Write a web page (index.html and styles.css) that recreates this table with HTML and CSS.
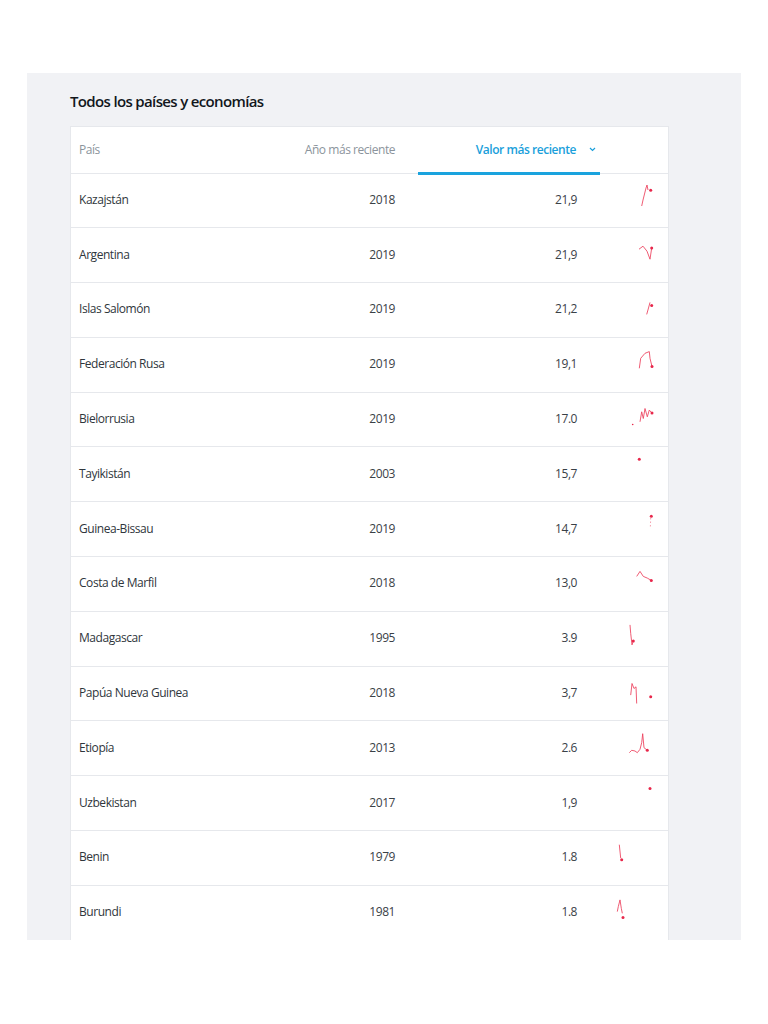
FILE: index.html
```html
<!DOCTYPE html>
<html lang="es">
<head>
<meta charset="utf-8">
<title>Todos los países y economías</title>
<link rel="stylesheet" href="styles.css">
</head>
<body>
<section class="panel">
  <h2 class="title">Todos los países y economías</h2>
  <div class="table">
    <div class="row head">
      <div class="cell c-country">País</div>
      <div class="cell c-year">Año más reciente</div>
      <div class="cell c-value sorted">Valor más reciente
        <svg class="chev" width="7" height="5" viewBox="0 0 7 5"><path d="M1 1l2.5 2.5L6 1" fill="none" stroke="#1a9fdb" stroke-width="1.2"/></svg>
      </div>
      <div class="cell c-chart"></div>
    </div>

    <div class="row">
      <div class="cell c-country">Kazajstán</div>
      <div class="cell c-year">2018</div>
      <div class="cell c-value">21,9</div>
      <div class="cell c-chart"><svg class="spark" viewBox="0 0 69 55"><polyline points="41.7,32 43,26 44.5,20 46,14 47,11 48,16"/><circle cx="50.7" cy="16.3" r="1.5"/></svg></div>
    </div>
    <div class="row">
      <div class="cell c-country">Argentina</div>
      <div class="cell c-year">2019</div>
      <div class="cell c-value">21,9</div>
      <div class="cell c-chart"><svg class="spark" viewBox="0 0 69 55"><polyline points="39,21.2 43,18.2 47,23.2 50,31.2 51.7,20"/><circle cx="51.7" cy="20" r="1.5"/></svg></div>
    </div>
    <div class="row">
      <div class="cell c-country">Islas Salomón</div>
      <div class="cell c-year">2019</div>
      <div class="cell c-value">21,2</div>
      <div class="cell c-chart"><svg class="spark" viewBox="0 0 69 55"><polyline points="46.7,31.4 48.5,25 50,19.4"/><circle cx="51.7" cy="22.4" r="1.5"/></svg></div>
    </div>
    <div class="row">
      <div class="cell c-country">Federación Rusa</div>
      <div class="cell c-year">2019</div>
      <div class="cell c-value">19,1</div>
      <div class="cell c-chart"><svg class="spark" viewBox="0 0 69 55"><polyline points="39.3,30.3 40.7,20.3 45,15.3 49.3,13.6 50,20.3 52,28.6"/><circle cx="52" cy="28.6" r="1.5"/></svg></div>
    </div>
    <div class="row">
      <div class="cell c-country">Bielorrusia</div>
      <div class="cell c-year">2019</div>
      <div class="cell c-value">17.0</div>
      <div class="cell c-chart"><svg class="spark" viewBox="0 0 69 55"><circle cx="32.7" cy="31.5" r="0.8"/><polyline points="40,28.8 41.7,18.8 43.3,25.5 45,15.5 47.3,23.8 49.3,17.1 52,20.1"/><circle cx="52" cy="20.1" r="1.5"/></svg></div>
    </div>
    <div class="row">
      <div class="cell c-country">Tayikistán</div>
      <div class="cell c-year">2003</div>
      <div class="cell c-value">15,7</div>
      <div class="cell c-chart"><svg class="spark" viewBox="0 0 69 55"><circle cx="39.3" cy="12.3" r="1.5"/></svg></div>
    </div>
    <div class="row">
      <div class="cell c-country">Guinea-Bissau</div>
      <div class="cell c-year">2019</div>
      <div class="cell c-value">14,7</div>
      <div class="cell c-chart"><svg class="spark" viewBox="0 0 69 55"><polyline class="faint" points="50.7,16 50.3,26.5"/><circle cx="51.3" cy="14.2" r="1.5"/></svg></div>
    </div>
    <div class="row">
      <div class="cell c-country">Costa de Marfil</div>
      <div class="cell c-year">2018</div>
      <div class="cell c-value">13,0</div>
      <div class="cell c-chart"><svg class="spark" viewBox="0 0 69 55"><polyline points="36.7,19.4 40,14.4 43.3,19.4 47.3,21.1 51.3,23.4"/><circle cx="51.3" cy="23.4" r="1.5"/></svg></div>
    </div>
    <div class="row">
      <div class="cell c-country">Madagascar</div>
      <div class="cell c-year">1995</div>
      <div class="cell c-value">3.9</div>
      <div class="cell c-chart"><svg class="spark" viewBox="0 0 69 55"><polyline points="30,12.9 30.7,21.3 32,32.9 33.3,28.9"/><circle cx="33.3" cy="28.9" r="1.5"/></svg></div>
    </div>
    <div class="row">
      <div class="cell c-country">Papúa Nueva Guinea</div>
      <div class="cell c-year">2018</div>
      <div class="cell c-value">3,7</div>
      <div class="cell c-chart"><svg class="spark" viewBox="0 0 69 55"><polyline points="30.7,28.1 32,16.5 34,21.5 36,19.8 36.7,36.5"/><circle cx="50.7" cy="29.8" r="1.5"/></svg></div>
    </div>
    <div class="row">
      <div class="cell c-country">Etiopía</div>
      <div class="cell c-year">2013</div>
      <div class="cell c-value">2.6</div>
      <div class="cell c-chart"><svg class="spark" viewBox="0 0 69 55"><polyline points="29.3,31.7 31.7,29.3 35,30 37.3,31.7 40,28.3 41.7,21.7 42.7,12.7 44,26.7 47.3,29.3"/><circle cx="47.3" cy="29.3" r="1.5"/></svg></div>
    </div>
    <div class="row">
      <div class="cell c-country">Uzbekistan</div>
      <div class="cell c-year">2017</div>
      <div class="cell c-value">1,9</div>
      <div class="cell c-chart"><svg class="spark" viewBox="0 0 69 55"><circle cx="50" cy="12.5" r="1.5"/></svg></div>
    </div>
    <div class="row">
      <div class="cell c-country">Benin</div>
      <div class="cell c-year">1979</div>
      <div class="cell c-value">1.8</div>
      <div class="cell c-chart"><svg class="spark" viewBox="0 0 69 55"><polyline points="19.3,13.7 20.7,27.1"/><circle cx="21.7" cy="28.7" r="1.5"/></svg></div>
    </div>
    <div class="row">
      <div class="cell c-country">Burundi</div>
      <div class="cell c-year">1981</div>
      <div class="cell c-value">1.8</div>
      <div class="cell c-chart"><svg class="spark" viewBox="0 0 69 55"><polyline points="17.3,25.6 18.3,20.6 20,13.9 21.3,22.3 22.3,27.3"/><circle cx="23" cy="31.6" r="1.5"/></svg></div>
    </div>
  </div>
</section>
</body>
</html>
```

FILE: styles.css
```css
html, body {
  margin: 0;
  padding: 0;
  background: #ffffff;
}

body {
  font-family: "Open Sans", "Noto Sans", "DejaVu Sans", sans-serif;
  color: #333a40;
}

.panel {
  box-sizing: border-box;
  margin: 73px 0 0 27px;
  width: 714px;
  height: 867px;
  padding: 18px 72px 0 43px;
  background: #f1f2f5;
  overflow: hidden;
}

.title {
  margin: 0 0 15px 0;
  font-size: 15px;
  line-height: 20px;
  font-weight: 600;
  letter-spacing: -0.65px;
  color: #12171c;
}

.table {
  background: #ffffff;
  border: 1px solid #e6e8ec;
  border-bottom: none;
}

.row {
  box-sizing: border-box;
  display: grid;
  grid-template-columns: 229px 118px 182px 1fr;
  height: 54.8px;
  border-bottom: 1.5px solid #e6e8ec;
  font-size: 12px;
  letter-spacing: -0.45px;
}

.row.head {
  height: 46.5px;
  border-bottom: 1.5px solid #e6e8ec;
}

.cell {
  display: flex;
  align-items: center;
  min-width: 0;
}

.c-country {
  padding-left: 8px;
  color: #2f363c;
}

.c-year {
  justify-content: flex-end;
  padding-right: 23px;
  color: #3a4147;
}

.c-value {
  justify-content: flex-end;
  padding-right: 23px;
  color: #3a4147;
}

.c-chart {
  position: relative;
}

.row .cell {
  padding-bottom: 2px;
}

.head .cell {
  color: #8b949c;
  padding-bottom: 0;
}

.head .c-value.sorted {
  position: relative;
  color: #1a9fdb;
  font-weight: 600;
  padding-right: 4px;
  gap: 13px;
}

.head .c-value.sorted::after {
  content: "";
  position: absolute;
  left: 0;
  right: 0;
  bottom: -2px;
  height: 2.5px;
  background: #1aa3de;
}

.chev {
  display: block;
}

.spark {
  position: absolute;
  left: 0;
  top: 0;
  width: 69px;
  height: 55px;
  overflow: visible;
}

.spark polyline {
  fill: none;
  stroke: #ec3f5c;
  stroke-width: 1;
  stroke-linejoin: round;
  opacity: 0.85;
}

.spark polyline.faint {
  stroke-dasharray: 1.5 2;
  opacity: 0.5;
}

.spark circle {
  fill: #e8274b;
}
```
